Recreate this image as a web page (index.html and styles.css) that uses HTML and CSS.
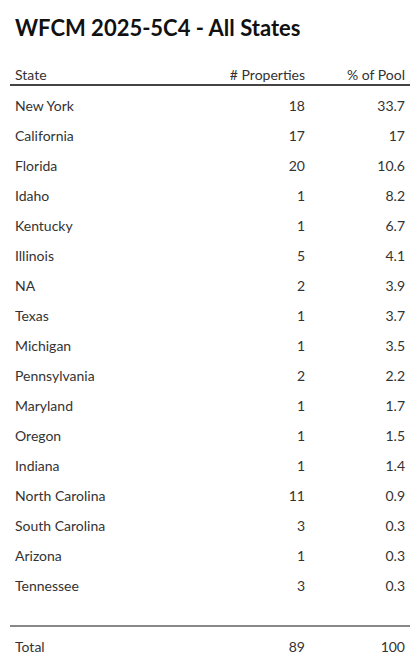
FILE: index.html
```html
<!DOCTYPE html>
<html>
<head>
<meta charset="utf-8">
<link rel="stylesheet" href="styles.css">
</head>
<body>
<div class="page">
  <h1 class="title">WFCM 2025-5C4 - All States</h1>
  <table class="states">
    <colgroup><col class="c-name"><col class="c-count"><col class="c-pool"></colgroup>
    <thead>
      <tr><th class="name">State</th><th class="num">#&nbsp;Properties</th><th class="num">%&nbsp;of&nbsp;Pool</th></tr>
    </thead>
    <tbody>
      <tr class="first"><td class="name">New York</td><td class="num">18</td><td class="num">33.7</td></tr>
      <tr><td class="name">California</td><td class="num">17</td><td class="num">17</td></tr>
      <tr><td class="name">Florida</td><td class="num">20</td><td class="num">10.6</td></tr>
      <tr><td class="name">Idaho</td><td class="num">1</td><td class="num">8.2</td></tr>
      <tr><td class="name">Kentucky</td><td class="num">1</td><td class="num">6.7</td></tr>
      <tr><td class="name">Illinois</td><td class="num">5</td><td class="num">4.1</td></tr>
      <tr><td class="name">NA</td><td class="num">2</td><td class="num">3.9</td></tr>
      <tr><td class="name">Texas</td><td class="num">1</td><td class="num">3.7</td></tr>
      <tr><td class="name">Michigan</td><td class="num">1</td><td class="num">3.5</td></tr>
      <tr><td class="name">Pennsylvania</td><td class="num">2</td><td class="num">2.2</td></tr>
      <tr><td class="name">Maryland</td><td class="num">1</td><td class="num">1.7</td></tr>
      <tr><td class="name">Oregon</td><td class="num">1</td><td class="num">1.5</td></tr>
      <tr><td class="name">Indiana</td><td class="num">1</td><td class="num">1.4</td></tr>
      <tr><td class="name">North Carolina</td><td class="num">11</td><td class="num">0.9</td></tr>
      <tr><td class="name">South Carolina</td><td class="num">3</td><td class="num">0.3</td></tr>
      <tr><td class="name">Arizona</td><td class="num">1</td><td class="num">0.3</td></tr>
      <tr><td class="name">Tennessee</td><td class="num">3</td><td class="num">0.3</td></tr>
      <tr class="spacer"><td colspan="3"></td></tr>
    </tbody>
    <tfoot>
      <tr><td class="name">Total</td><td class="num">89</td><td class="num">100</td></tr>
    </tfoot>
  </table>
</div>
</body>
</html>
```

FILE: styles.css
```css
html, body {
  margin: 0;
  padding: 0;
  background: #ffffff;
}
body {
  font-family: Lato, "Liberation Sans", sans-serif;
  color: #333333;
}
.page {
  padding: 0 10px;
}
.title {
  margin: 0;
  padding: 15px 5px 0;
  font-size: 22px;
  line-height: 26px;
  font-weight: 700;
  color: #111111;
}
.states {
  margin-top: 25px;
  width: 400px;
  border-collapse: collapse;
  font-size: 14px;
}
.c-pool { width: 100px; }
.c-count { width: 110px; }
.states th {
  font-weight: 400;
  line-height: 17px;
  padding: 0 5px 1px;
  border-bottom: 2px solid #444444;
}
.states td {
  line-height: 20px;
  padding: 5px 5px;
}
.name { text-align: left; }
.num { text-align: right; }
.states tr.first td { padding-top: 10px; }
.states tr.spacer td { padding: 0; height: 24px; }
.states tfoot td {
  border-top: 2px solid #888888;
  padding-top: 10px;
}
```
